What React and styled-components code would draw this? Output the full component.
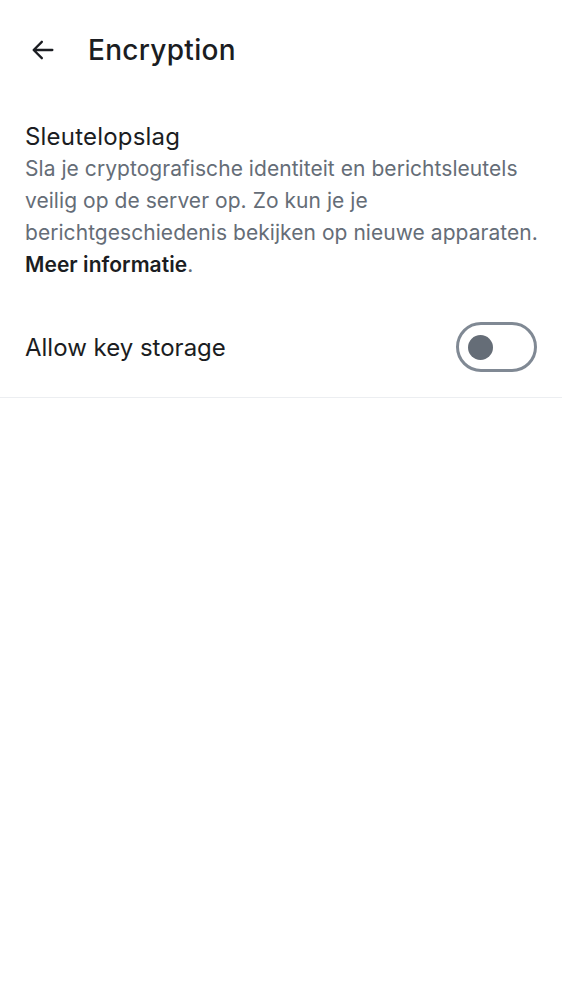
import React, { useState } from "react";
import styled, { createGlobalStyle } from "styled-components";

const GlobalStyle = createGlobalStyle`
  html, body {
    margin: 0;
    padding: 0;
    background: #ffffff;
    font-family: Inter, "Liberation Sans", sans-serif;
  }
`;

function App() {
  const [allowed, setAllowed] = useState(false);

  return (
    <Page>
      <GlobalStyle />
      <Header>
        <BackButton aria-label="Back">
          <svg width="28" height="28" viewBox="0 0 24 24" fill="none">
            <path
              d="M20 12H4.5M11 5l-7 7 7 7"
              stroke="#1b1d22"
              strokeWidth="2"
              strokeLinecap="round"
              strokeLinejoin="round"
            />
          </svg>
        </BackButton>
        <HeaderTitle>Encryption</HeaderTitle>
      </Header>

      <Section>
        <SectionTitle>Sleutelopslag</SectionTitle>
        <Description>
          Sla je cryptografische identiteit en berichtsleutels veilig op de
          server op. Zo kun je je berichtgeschiedenis bekijken op nieuwe
          apparaten. <Strong>Meer informatie</Strong>.
        </Description>
      </Section>

      <SwitchRow>
        <RowLabel>Allow key storage</RowLabel>
        <Switch $on={allowed} onClick={() => setAllowed(!allowed)}>
          <Thumb $on={allowed} />
        </Switch>
      </SwitchRow>
    </Page>
  );
}

const Page = styled.div`
  width: 562px;
  min-height: 1000px;
  background: #ffffff;
  color: #1b1d22;
`;

const Header = styled.header`
  display: flex;
  align-items: center;
  height: 100px;
  padding-left: 29px;
  gap: 31px;
`;

const BackButton = styled.button`
  display: flex;
  align-items: center;
  justify-content: center;
  width: 28px;
  height: 28px;
  padding: 0;
  border: none;
  background: transparent;
  cursor: pointer;
`;

const HeaderTitle = styled.h1`
  margin: 0;
  font-size: 28px;
  font-weight: 500;
  letter-spacing: 0.3px;
  color: #1b1d22;
`;

const Section = styled.section`
  padding: 21px 12px 0 25px;
`;

const SectionTitle = styled.div`
  font-size: 24px;
  line-height: 32px;
  letter-spacing: 0.2px;
  color: #1b1d22;
`;

const Description = styled.p`
  margin: 0;
  font-size: 21px;
  line-height: 32px;
  letter-spacing: 0.05px;
  color: #656d77;
`;

const Strong = styled.span`
  font-weight: 600;
  color: #1b1d22;
`;

const SwitchRow = styled.div`
  display: flex;
  align-items: center;
  justify-content: space-between;
  margin-top: 16px;
  padding: 25px;
  border-bottom: 1px solid #eceef1;
`;

const RowLabel = styled.span`
  font-size: 24px;
  color: #1b1d22;
`;

const Switch = styled.button`
  display: flex;
  align-items: center;
  box-sizing: border-box;
  width: 81px;
  height: 50px;
  padding: 0 0 0 9px;
  border: 3px solid ${(p) => (p.$on ? "#0a7e4a" : "#808994")};
  border-radius: 25px;
  background: ${(p) => (p.$on ? "#0a7e4a" : "#ffffff")};
  cursor: pointer;
`;

const Thumb = styled.span`
  display: block;
  width: 25px;
  height: 25px;
  border-radius: 50%;
  background: ${(p) => (p.$on ? "#ffffff" : "#656d77")};
  transform: translateX(${(p) => (p.$on ? "32px" : "0")});
`;

export default App;
